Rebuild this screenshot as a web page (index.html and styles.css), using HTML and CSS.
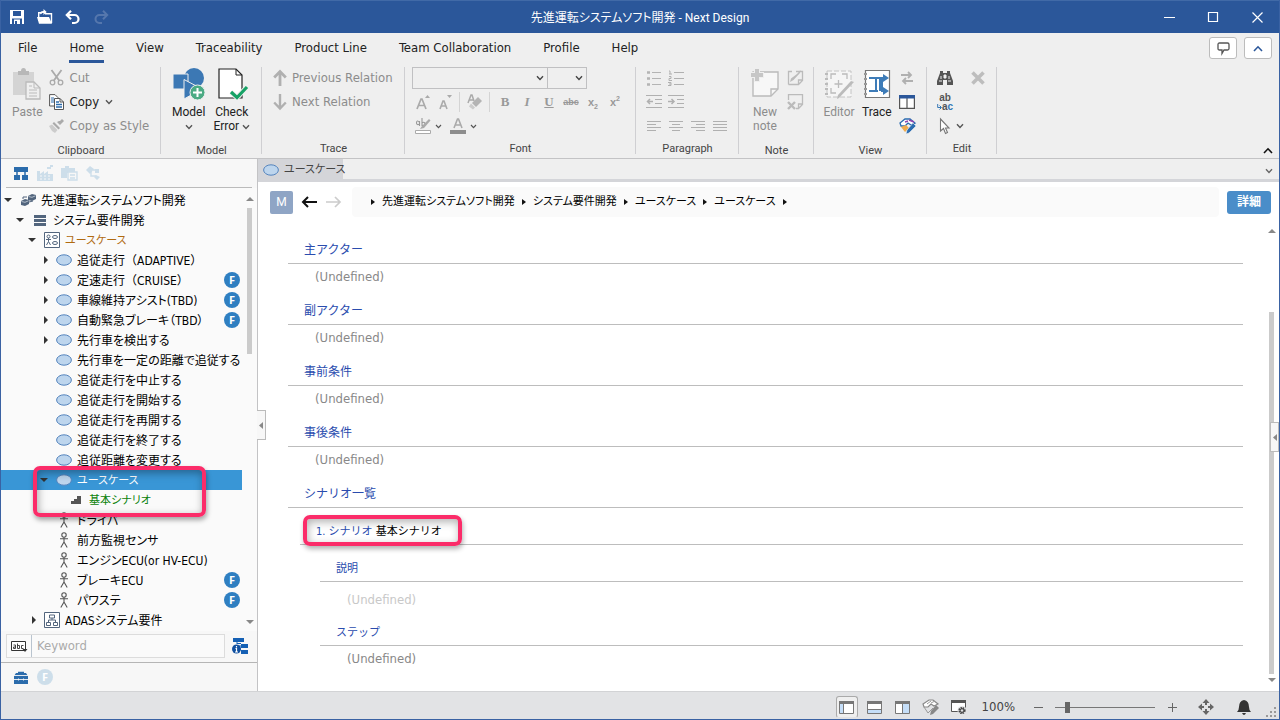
FILE: index.html
```html
<!DOCTYPE html>
<html lang="ja">
<head>
<meta charset="utf-8">
<title>先進運転システムソフト開発 - Next Design</title>
<link rel="stylesheet" href="styles.css">
</head>
<body>
<svg class="defs" width="0" height="0" aria-hidden="true">
  <symbol id="chev" viewBox="0 0 8 6"><path d="M1 1.200 4 4.400 7 1.200" fill="none" stroke="currentColor" stroke-width="1.400"/></symbol>
  <symbol id="chev-up" viewBox="0 0 10 7"><path d="M1 6 5 1.800 9 6" fill="none" stroke="currentColor" stroke-width="1.600"/></symbol>
  <symbol id="open" viewBox="0 0 8 4"><path d="M0 0h8L4 4z" fill="#333"/></symbol>
  <symbol id="closed" viewBox="0 0 4 8"><path d="M0 0v8l4-4z" fill="#333"/></symbol>
  <symbol id="oval" viewBox="0 0 16 12"><ellipse cx="8" cy="6" rx="7.400" ry="5.200" fill="#bdd5ed" stroke="#5584bd"/></symbol>
  <symbol id="actor" viewBox="0 0 10 16"><g fill="none" stroke="#555" stroke-width="1.100"><circle cx="5" cy="3" r="2.200"/><path d="M1 6.700h8M5 5.200v5M5 10 1.800 15.500M5 10l3.200 5.500"/></g></symbol>
</svg>

<div class="window">
  <header class="titlebar">
    <div class="quick">
      <button aria-label="Save"><svg width="14" height="14" viewBox="0 0 14 14"><path d="M0 0h14v14H0z" fill="#fff"/><path d="M3 1h8v5H3zM2 8.500h10V14H2z" fill="#2b579a"/><path d="M4 9.500h6V14H4z" fill="#fff"/><path d="M5 11h2v3H5z" fill="#2b579a"/></svg></button>
      <button aria-label="Open"><svg width="16" height="16" viewBox="0 0 16 16"><path d="M1.700 12V3.700H5M8 4.700h6.500V14" fill="none" stroke="#fff" stroke-width="1.400"/><path d="m0 8 2 6.700h13L12 8z" fill="#fff"/><path d="M3 5.500C3 3 4 2 6.500 2V0l3.200 3-3.200 3V4C5 4 4 4.500 3 5.500z" fill="#fff"/></svg></button>
      <button aria-label="Undo"><svg width="16" height="15" viewBox="0 0 16 15"><path d="M2 5h7.500a4 4 0 0 1 0 8H7M6 .8 1.800 5 6 9.200" fill="none" stroke="#fff" stroke-width="2.200"/></svg></button>
      <button aria-label="Redo" disabled><svg width="16" height="15" viewBox="0 0 16 15"><path d="M14 5H6.500a4 4 0 0 0 0 8H9M10 .8 14.200 5 10 9.200" fill="none" stroke="#5577ad" stroke-width="2"/></svg></button>
    </div>
    <h1>先進運転システムソフト開発 - Next Design</h1>
    <div class="winctl">
      <button aria-label="Minimize"><svg width="11" height="11"><path d="M0 5.500h11" stroke="#fff"/></svg></button>
      <button aria-label="Maximize"><svg width="11" height="11"><path d="M.5.5h9v9h-9z" fill="none" stroke="#fff" stroke-width="1.200"/></svg></button>
      <button aria-label="Close"><svg width="11" height="11"><path d="m.5.5 10 10m0-10-10 10" stroke="#fff" stroke-width="1.200"/></svg></button>
    </div>
  </header>

  <nav class="tabs">
    <a href="#">File</a><a href="#" class="active">Home</a><a href="#">View</a><a href="#">Traceability</a><a href="#">Product Line</a><a href="#">Team Collaboration</a><a href="#">Profile</a><a href="#">Help</a>
    <div class="tabs-end">
      <button aria-label="Feedback"><svg width="13" height="13"><path d="M2.500 1h8q1.500 0 1.500 1.500v4Q12 8 10.500 8H7l-2 3.500V8H2.500Q1 8 1 6.500v-4Q1 1 2.500 1z" fill="none" stroke="#555" stroke-width="1.300"/></svg></button>
      <button aria-label="Collapse ribbon" class="blue"><svg width="10" height="7"><use href="#chev-up"/></svg></button>
    </div>
  </nav>

  <section class="ribbon" aria-label="Ribbon">
    <div class="group g-clip">
      <div class="body">
        <button class="large off"><span class="pic"><svg width="30" height="32" viewBox="0 0 30 32"><path d="M1 4h21v10h-7v13H1z" fill="#d4d4d4"/><path d="M6 3h3q0-3 2.500-3T14 3h3v4H6z" fill="#b8b8b8"/><path d="M14 14h8l6 6v11H14z" fill="#efefef" stroke="#bbb" stroke-width="1.300"/><path d="M22 14v6h6M17 18h3M17 22h8M17 25h8M17 28h8" fill="none" stroke="#bbb"/></svg></span>Paste</button>
        <div class="rows">
          <button class="row off"><svg width="14" height="16" viewBox="0 0 14 16"><path d="M2 0 10 11M12 0 4 11" stroke="#aaa" stroke-width="1.800"/><circle cx="3" cy="12.500" r="2.300" fill="none" stroke="#aaa" stroke-width="1.300"/><circle cx="11" cy="12.500" r="2.300" fill="none" stroke="#aaa" stroke-width="1.300"/></svg>Cut</button>
          <button class="row"><svg width="15" height="16" viewBox="0 0 15 16"><path d="M.6.600h5.400l3 3v8.400H.6z" fill="#fff" stroke="#555"/><path d="M2 4h3M2 6h3M2 8h3" stroke="#2d6bab"/><path d="M5.500 4.500h5.500l3.500 3.500v7.500h-9z" fill="#fff" stroke="#555"/><path d="M11 4.500v3.500h3.500" fill="none" stroke="#555"/><path d="M7 8h3M7 10.500h6M7 13h6" stroke="#2d6bab" stroke-width="1.300"/></svg>Copy <svg class="c" width="8" height="6"><use href="#chev"/></svg></button>
          <button class="row off"><svg width="15" height="14" viewBox="0 0 15 14"><path d="m13 0 2 2-4 4-3-3 2-1 1 0z" fill="#aaa"/><path d="m5 3 6 6-1.500 1.500-6-6z" fill="#aaa"/><path d="m3 5.500 5.500 5.500L6 14 3 12l-3-5z" fill="#ccc"/></svg>Copy as Style</button>
        </div>
      </div>
      <span class="caption">Clipboard</span>
    </div>

    <div class="group g-model">
      <div class="body">
        <button class="large"><span class="pic"><svg width="32" height="32" viewBox="0 0 32 32"><circle cx="21" cy="10" r="10" fill="#3c78b4"/><path d="M0 6h15v15H0z" fill="#3c78b4" stroke="#efefef"/><path d="M11 11.500 29 21 11 31z" fill="#3c78b4" stroke="#efefef"/><circle cx="24.500" cy="24.500" r="7.500" fill="#4cab84" stroke="#efefef"/><path d="M24.500 20v9M20 24.500h9" stroke="#fff" stroke-width="2"/></svg></span>Model<svg class="c" width="8" height="6"><use href="#chev"/></svg></button>
        <button class="large"><span class="pic"><svg width="32" height="32" viewBox="0 0 32 32"><path d="M3 1h17l6 6v23H3z" fill="#fff" stroke="#222" stroke-width="1.200"/><path d="M20 1v6h6" fill="none" stroke="#222"/><path d="m15 24 6 5.500L31 19" fill="none" stroke="#efefef" stroke-width="5"/><path d="m15 24 6 5.500L31 19" fill="none" stroke="#17a266" stroke-width="3.200"/></svg></span>Check<span>Error <svg class="c" width="8" height="6"><use href="#chev"/></svg></span></button>
      </div>
      <span class="caption">Model</span>
    </div>

    <div class="group g-trace">
      <div class="body"><div class="rows">
        <button class="row off"><svg width="14" height="16"><path d="M7 16V2M1.200 7.500 7 1.500l5.800 6" fill="none" stroke="#b0b0b0" stroke-width="2.800"/></svg>Previous Relation</button>
        <button class="row off"><svg width="14" height="16"><path d="M7 0v14M1.200 8.500 7 14.500l5.800-6" fill="none" stroke="#b0b0b0" stroke-width="2.400"/></svg>Next Relation</button>
      </div></div>
      <span class="caption">Trace</span>
    </div>

    <div class="group g-font">
      <div class="body"><div class="rows">
        <div class="cells combos">
          <span class="combo wide"><select aria-label="Font name"><option></option></select><svg width="8" height="6"><use href="#chev"/></svg></span><span class="combo"><select aria-label="Font size"><option></option></select><svg width="8" height="6"><use href="#chev"/></svg></span>
        </div>
        <div class="cells">
          <button aria-label="Grow font"><svg width="14" height="15"><path d="m1 14 4-10h1l4 10M2.500 10.500h6" fill="none" stroke="#aaa" stroke-width="1.700"/><path d="m9 3 2.500-3L14 3z" fill="#aaa"/></svg></button>
          <button aria-label="Shrink font"><svg width="14" height="15"><path d="m2 14 3-8h1l3 8M3 11h5" fill="none" stroke="#aaa" stroke-width="1.600"/><path d="m9 0h5l-2.500 3z" fill="#aaa"/></svg></button>
          <i class="bar"></i>
          <button aria-label="Clear format"><svg width="16" height="16"><path d="M1 9 4 1h1l2 6M2 6h4" fill="none" stroke="#aaa" stroke-width="1.500"/><path d="m11 3 4 4-6 6-4-4z" fill="#b4b4b4"/><path d="m4 9.500 4 4-2 2-4-3z" fill="#ccc"/></svg></button>
          <i class="bar"></i>
          <button class="tx b">B</button><button class="tx i">I</button><button class="tx u">U</button><button class="tx s">abc</button><button class="tx x">x<sub>2</sub></button><button class="tx x">x<sup>2</sup></button>
        </div>
        <div class="cells">
          <button aria-label="Highlight"><svg width="16" height="16"><path d="M4.500 3v5M4.500 4.500C1-.5 0 9 4.500 6M7 0v8M7 5c4-3 4 5 0 2" fill="none" stroke="#999" stroke-width="1.100"/><path d="m14 1 1.500 1.500L9 10l-4 1 2-3z" fill="#aaa"/><path d="M.5 12.500h15v3H.5z" fill="#fff" stroke="#aaa"/></svg></button><button class="drop" aria-label="Highlight options"><svg class="c" width="7" height="5"><use href="#chev"/></svg></button>
          <button aria-label="Font color"><svg width="16" height="16"><path d="m4 10 3.500-9h1L12 10M5.500 7h5" fill="none" stroke="#aaa" stroke-width="1.600"/><path d="M0 12h16v4H0z" fill="#8d8d8d"/></svg></button><button class="drop" aria-label="Color options"><svg class="c" width="7" height="5"><use href="#chev"/></svg></button>
        </div>
      </div></div>
      <span class="caption">Font</span>
    </div>

    <div class="group g-para">
      <div class="body"><div class="rows">
        <div class="cells">
          <button aria-label="Bullets"><svg width="14" height="16" stroke="#b4b4b4"><path d="M5 2.500h9M5 8.500h9M5 14.500h9"/><path d="M0 2.500h3M0 8.500h3M0 14.500h3" stroke-width="2.400"/></svg></button>
          <button aria-label="Numbering"><svg width="16" height="16" stroke="#b0b0b0" fill="none"><path d="M6 2.500h10M6 8.500h10M6 14.500h10"/><path d="M1 1h1v3M1 4h3M1 6.500h2v2H1v2h3M0 12.500h3v3H0m1-1.500h2"/></svg></button>
        </div>
        <div class="cells">
          <button aria-label="Outdent"><svg width="16" height="14" stroke="#b0b0b0" fill="none"><path d="M0 .5h16M9 4.500h7M9 8.500h7M0 12.500h16"/><path d="M7 6.500H1.500M4 4 1.500 6.500 4 9" stroke-width="1.500"/></svg></button>
          <button aria-label="Indent"><svg width="16" height="14" stroke="#b0b0b0" fill="none"><path d="M0 .5h16M9 4.500h7M9 8.500h7M0 12.500h16"/><path d="M0 6.500h6M3.500 4 6 6.500 3.500 9" stroke-width="1.500"/></svg></button>
        </div>
        <div class="cells">
          <button aria-label="Left"><svg width="14" height="11" stroke="#b0b0b0"><path d="M0 .5h14M0 3.500h9M0 6.500h14M0 9.500h9"/></svg></button>
          <button aria-label="Center"><svg width="14" height="11" stroke="#b0b0b0"><path d="M0 .5h14M3 3.500h8M0 6.500h14M3 9.500h8"/></svg></button>
          <button aria-label="Right"><svg width="14" height="11" stroke="#b0b0b0"><path d="M0 .5h14M5 3.500h9M0 6.500h14M5 9.500h9"/></svg></button>
          <button aria-label="Justify"><svg width="14" height="11" stroke="#b0b0b0"><path d="M0 .5h14M0 3.500h14M0 6.500h14M0 9.500h14"/></svg></button>
        </div>
      </div></div>
      <span class="caption">Paragraph</span>
    </div>

    <div class="group g-note">
      <div class="body">
        <button class="large off"><span class="pic"><svg width="30" height="32" viewBox="0 0 30 32"><path d="M3 4h25v17l-7 7H3z" fill="#f7f7f7" stroke="#bbb" stroke-width="1.400"/><path d="M21 28v-7h7" fill="none" stroke="#bbb" stroke-width="1.400"/><path d="M7 0v14M0 7h14" stroke="#efefef" stroke-width="6"/><path d="M7 1v12M1 7h12" stroke="#c6c6c6" stroke-width="4"/></svg></span><span>New<br>note</span></button>
        <div class="rows">
          <button class="row" aria-label="Edit note"><svg width="17" height="16"><path d="M5 1.500H1.500v13M9 1.500h6.500v9l-4 4h-10M11.500 14v-4h4" fill="none" stroke="#bbb" stroke-width="1.300"/><path d="M13.500 0 10 4 4 8.500 3 12l3.500-2L13 3z" fill="#bbb"/></svg></button>
          <button class="row" aria-label="Delete note"><svg width="17" height="16"><path d="M1.500 6V.7h14v9.800l-4 4H9M11.500 14v-4h4" fill="none" stroke="#bbb" stroke-width="1.300"/><path d="m1 8 7 7m0-7-7 7" stroke="#bbb" stroke-width="2.400"/></svg></button>
        </div>
      </div>
      <span class="caption">Note</span>
    </div>

    <div class="group g-view">
      <div class="body">
        <button class="large off"><span class="pic"><svg width="32" height="32" viewBox="0 0 32 32"><path d="M4 3h24v26H4z" fill="#f5f5f5" stroke="#c4c4c4" stroke-dasharray="5 2"/><path d="M8 11V6h5M19 6h5v5M8 20v5h5M15.500 12v8M11.500 16h8" fill="none" stroke="#bbb" stroke-width="1.300"/><path d="M2 6h3M2 11h3M2 16h3M2 21h3M2 26h3" stroke="#bbb" stroke-width="2"/><path d="M31 14 16 30l-2 1 1-4L28 13z" fill="#bbb"/></svg></span>Editor</button>
        <button class="large"><span class="pic"><svg width="28" height="32" viewBox="0 0 28 32"><path d="M2.500 2.500h24v27h-24z" fill="#fff" stroke="#777" stroke-width="1.200"/><path d="M1 6h3M1 11h3M1 16h3M1 21h3M1 26h3" stroke="#999" stroke-width="2"/><path d="M6 10h7v12M6 23h5M10 23h5M17 23V10M12 10h11M17 10h2v13h4" fill="none" stroke="#3e7cb8" stroke-width="2"/><path d="m20 6 6 4-6 4zM20 19l6 4-6 4z" fill="#3e7cb8"/></svg></span>Trace</button>
        <div class="rows">
          <button class="row" aria-label="Swap"><svg width="14" height="14"><path d="M1 4h10M8 1l3 3-3 3M13 10H3m3-3-3 3 3 3" fill="none" stroke="#b0b0b0" stroke-width="1.800"/></svg></button>
          <button class="row" aria-label="Split view"><svg width="16" height="14"><path d="M.6.600h14.800v12.800H.6zM8 3v10" fill="#fff" stroke="#555" stroke-width="1.200"/><path d="M0 0h16v3.500H0z" fill="#2b579a"/></svg></button>
          <button class="row" aria-label="Paint"><svg width="17" height="16"><path d="M1 5 6 1l5 0 5 4-4 2-3-2-3 3-4 0z" fill="#fff" stroke="#2b6cb0" stroke-width="1.300"/><path d="m6 4 3-1M10 2l5 2" stroke="#8e44ad" stroke-width="1.500"/><path d="m2 9 5-2 3 3-4 4z" fill="#f0ab4c"/><path d="m14 5 3 3-7 7-3 1 1-4z" fill="#2b6cb0" stroke="#efefef" stroke-width=".6"/></svg></button>
        </div>
      </div>
      <span class="caption">View</span>
    </div>

    <div class="group g-edit">
      <div class="body"><div class="rows">
        <div class="cells"><button aria-label="Find"><svg width="16" height="14"><path d="M3 0h3v2h4V0h3v2l3 8v4h-6V9H6v5H0v-4l3-8z" fill="#555"/><path d="M7 4h2v3H7zM2 10h3M11 10h3M4 5v3M12 5v3" stroke="#efefef" fill="#efefef"/></svg></button><button class="del" aria-label="Delete"><svg width="14" height="14"><path d="m1.500 1.500 11 11m0-11-11 11" stroke="#bdbdbd" stroke-width="3.600"/></svg></button></div>
        <div class="cells"><button aria-label="Replace" class="replace"><span>ab</span><span><svg width="5" height="6"><path d="M.7 0v3.500H4M2.500 1.500l2 2-2 2" fill="none" stroke="#3578b5"/></svg>a<b>c</b></span></button></div>
        <div class="cells"><button aria-label="Select"><svg width="12" height="16"><path d="M1.500 1v12l3-2.500 2 5 2-1-2-4.500H10z" fill="#fff" stroke="#777" stroke-width="1.100"/></svg></button><button class="near" aria-label="Select options"><svg class="c" width="8" height="6"><use href="#chev"/></svg></button></div>
      </div></div>
      <span class="caption">Edit</span>
    </div>
    <button class="fold" aria-label="Fold ribbon"><svg width="10" height="7"><use href="#chev-up"/></svg></button>
  </section>

  <div class="work">
    <aside class="side">
      <div class="sidebar-tools">
        <button aria-label="Structure"><svg width="14" height="13"><path d="M0 0h14v5H0zM0 8h6v5H0zM8 8h6v5H8z" fill="#2b6cac"/><path d="M3 4v5M11 4v5" stroke="#2b6cac" stroke-width="1.500"/></svg></button>
        <button aria-label="Product line"><svg width="16" height="16" fill="#cddeea"><path d="M0 6h3v3l4-3v3l4-3v3h5v7H0zM10 2h4v2h-4zM13 0h3v2h-3z"/><path d="M3 11h2M7 11h2M11 11h2M3 14h2M7 14h2M11 14h2" stroke="#f7f7f7"/></svg></button>
        <button aria-label="Documents"><svg width="17" height="15"><path d="M0 2h4V0h4v2h6v5H6v5H0z" fill="#cddeea"/><path d="M7 6h9v8H7zM9 9h5M9 12h5" fill="#f7f7f7" stroke="#cddeea" stroke-width="1.400"/></svg></button>
        <button aria-label="Links"><svg width="15" height="14" fill="#cddeea"><path d="m4 0 4 3-4 5-4-4zM9 3h4v4H9zM10 9l4 2-3 3-3-3z"/><path d="M5 5v5h5M7 4h4" fill="none" stroke="#cddeea" stroke-width="1.400"/></svg></button>
      </div>
      <div class="tree-area">
        <ul class="tree">
          <li><span class="tw"><svg width="8" height="4"><use href="#open"/></svg></span><span class="ic"><svg width="15" height="13"><path d="m7 2 4-2 4 1v4l-4 2-4-1zM0 7l4-2 4 1v4l-4 2-4-1z" fill="#52657d"/><path d="M2 5V3h4M8 8l4-1" fill="none" stroke="#52657d"/><path d="m7.500 2.500 3.500.8 3.500-1.500M.5 7.500 4 8.300l3.500-1.500" stroke="#ccd4dd" fill="none" stroke-width=".8"/></svg></span>先進運転システムソフト開発</li>
          <li class="l1"><span class="tw"><svg width="8" height="4"><use href="#open"/></svg></span><span class="ic"><svg width="12" height="11"><path d="M0 0h12v3H0zM0 4h12v3H0zM0 8h12v3H0z" fill="#52657d"/></svg></span>システム要件開発</li>
          <li class="l2 kana orange"><span class="tw"><svg width="8" height="4"><use href="#open"/></svg></span><span class="ic"><svg width="16" height="16"><g fill="none" stroke="#52657d"><path d="M.5.5h15v15H.5z" fill="#fff"/><circle cx="4.500" cy="4.500" r="1.500"/><path d="M2 7.500h5M4.500 6v3.500L2.500 13m2-3.500 2 3.500"/><ellipse cx="11" cy="5" rx="2.500" ry="1.500"/><ellipse cx="11" cy="11" rx="2.500" ry="1.500"/></g></svg></span>ユースケース</li>
          <li class="l3 full"><span class="tw shut"><svg width="4" height="8"><use href="#closed"/></svg></span><span class="ic"><svg width="16" height="12"><use href="#oval"/></svg></span>追従走行（ADAPTIVE）</li>
          <li class="l3 full"><span class="tw shut"><svg width="4" height="8"><use href="#closed"/></svg></span><span class="ic"><svg width="16" height="12"><use href="#oval"/></svg></span>定速走行（CRUISE）<b class="f">F</b></li>
          <li class="l3"><span class="tw shut"><svg width="4" height="8"><use href="#closed"/></svg></span><span class="ic"><svg width="16" height="12"><use href="#oval"/></svg></span>車線維持アシスト(TBD)<b class="f">F</b></li>
          <li class="l3"><span class="tw shut"><svg width="4" height="8"><use href="#closed"/></svg></span><span class="ic"><svg width="16" height="12"><use href="#oval"/></svg></span>自動緊急ブレーキ（TBD）<b class="f">F</b></li>
          <li class="l3"><span class="tw shut"><svg width="4" height="8"><use href="#closed"/></svg></span><span class="ic"><svg width="16" height="12"><use href="#oval"/></svg></span>先行車を検出する</li>
          <li class="l3"><span class="tw"></span><span class="ic"><svg width="16" height="12"><use href="#oval"/></svg></span>先行車を一定の距離で追従する</li>
          <li class="l3"><span class="tw"></span><span class="ic"><svg width="16" height="12"><use href="#oval"/></svg></span>追従走行を中止する</li>
          <li class="l3"><span class="tw"></span><span class="ic"><svg width="16" height="12"><use href="#oval"/></svg></span>追従走行を開始する</li>
          <li class="l3"><span class="tw"></span><span class="ic"><svg width="16" height="12"><use href="#oval"/></svg></span>追従走行を再開する</li>
          <li class="l3"><span class="tw"></span><span class="ic"><svg width="16" height="12"><use href="#oval"/></svg></span>追従走行を終了する</li>
          <li class="l3"><span class="tw"></span><span class="ic"><svg width="16" height="12"><use href="#oval"/></svg></span>追従距離を変更する</li>
          <li class="l3 kana selected"><span class="tw"><svg width="8" height="4"><use href="#open"/></svg></span><span class="ic"><svg width="16" height="12"><use href="#oval"/></svg></span>ユースケース<i class="callout"></i></li>
          <li class="l4 kana green"><span class="tw"></span><span class="ic"><svg width="10" height="9"><path d="M0 5h3V3h3V0h4v8H0z" fill="#555"/></svg></span>基本シナリオ</li>
          <li class="l3"><span class="tw"></span><span class="ic"><svg width="10" height="16"><use href="#actor"/></svg></span>ドライバ</li>
          <li class="l3"><span class="tw"></span><span class="ic"><svg width="10" height="16"><use href="#actor"/></svg></span>前方監視センサ</li>
          <li class="l3"><span class="tw"></span><span class="ic"><svg width="10" height="16"><use href="#actor"/></svg></span>エンジンECU(or HV-ECU)</li>
          <li class="l3"><span class="tw"></span><span class="ic"><svg width="10" height="16"><use href="#actor"/></svg></span>ブレーキECU<b class="f">F</b></li>
          <li class="l3"><span class="tw"></span><span class="ic"><svg width="10" height="16"><use href="#actor"/></svg></span>パワステ<b class="f">F</b></li>
          <li class="l2"><span class="tw shut"><svg width="4" height="8"><use href="#closed"/></svg></span><span class="ic"><svg width="16" height="16"><g fill="none" stroke="#52657d"><path d="M.5.500h15v15H.5z" fill="#fff"/><path d="M5.500 3h5v3h-5zM2.500 10.500h4v3h-4zM9.500 10.500h4v3h-4zM8 6v2M4.500 10.500V8h7v2.500"/></g></svg></span>ADASシステム要件</li>
        </ul>
        <div class="scroll"><svg width="8" height="4"><path d="M0 4h8L4 0z" fill="#888"/></svg><i class="thumb"></i><svg class="end" width="8" height="4"><path d="M0 0h8L4 4z" fill="#888"/></svg></div>
      </div>
      <div class="search">
        <div class="box"><button aria-label="Match mode"><svg width="17" height="11"><path d="M.5.500h14v9H.5z" fill="#fff" stroke="#333"/><g fill="none" stroke="#333" stroke-width=".9"><path d="M2.500 4h2v3.500h-2V6h2M6.500 2.500v5h2V4.500h-2M12.500 4.500h-2v3h2"/></g><path d="M11.500 8h5l-2.500 3z" fill="#333"/></svg></button><input type="text" placeholder="Keyword" aria-label="Keyword"></div>
        <button class="filter" aria-label="Filter"><svg width="16" height="16"><path d="M1 0h11v4H1zM9 6h7v4H9zM9 12h7v4H9z" fill="#1560b4"/><path d="M5 4v2M5 5.500h4M7 8h3" stroke="#1560b4"/><circle cx="4.500" cy="11" r="4.500" fill="#1050a0"/><path d="M4.500 8v1.500M3.500 10.500h1V14M3 14h3" stroke="#fff" stroke-width="1.200" fill="none"/></svg></button>
      </div>
      <div class="side-foot">
        <button aria-label="Toolbox"><svg width="14" height="13"><path d="M4 2V.7h6V2h2l2 3v8H0V5l2-3z" fill="#2b6cac"/><path d="M0 4.500h14M0 8.500h14M4.500 7.500v2M9.500 7.500v2" stroke="#f7f7f7" stroke-width=".9"/></svg></button>
        <button aria-label="Feature" class="f dim">F</button>
      </div>
    </aside>

    <main class="main">
      <div class="doctabs"><button class="doctab"><svg width="16" height="12"><use href="#oval"/></svg>ユースケース</button><button class="more" aria-label="Tab list"><svg width="8" height="6"><use href="#chev"/></svg></button></div>
      <div class="crumbbar">
        <button class="m">M</button>
        <button class="nav" aria-label="Back"><svg width="16" height="12"><path d="M16 6H2M7 1 2 6l5 5" fill="none" stroke="#111" stroke-width="2"/></svg></button>
        <button class="nav fwd" aria-label="Forward"><svg width="16" height="12"><path d="M0 6h14M9 1l5 5-5 5" fill="none" stroke="#ccc" stroke-width="1.700"/></svg></button>
        <nav class="crumbs"><i></i><a href="#">先進運転システムソフト開発</a><i></i><a href="#">システム要件開発</a><i></i><a href="#">ユースケース</a><i></i><a href="#">ユースケース</a><i></i></nav>
        <button class="detail">詳細</button>
      </div>
      <div class="doc">
        <div class="sheet">
          <p class="value">(Undefined)</p>
          <section><h2>主アクター</h2><p class="value">(Undefined)</p></section>
          <section><h2>副アクター</h2><p class="value">(Undefined)</p></section>
          <section><h2>事前条件</h2><p class="value">(Undefined)</p></section>
          <section><h2>事後条件</h2><p class="value">(Undefined)</p></section>
          <section><h2>シナリオ一覧</h2>
            <article>
              <h3><span class="mark">1. シナリオ <b>基本シナリオ</b></span></h3>
              <div class="sub">
                <h4>説明</h4><p class="value light">(Undefined)</p>
                <h4>ステップ</h4><p class="value">(Undefined)</p>
              </div>
            </article>
          </section>
        </div>
        <div class="scroll doc-scroll"><svg width="8" height="4"><path d="M0 4h8L4 0z" fill="#888"/></svg><i class="thumb"></i><svg class="end" width="8" height="4"><path d="M0 0h8L4 4z" fill="#888"/></svg></div>
      </div>
      <button class="handle left" aria-label="Collapse left"><svg width="4" height="7"><path d="M4 0v7L0 3.500z" fill="#888"/></svg></button>
      <button class="handle right" aria-label="Expand right"><svg width="4" height="7"><path d="M4 0v7L0 3.500z" fill="#888"/></svg></button>
    </main>
  </div>

  <footer class="status">
    <button class="on" aria-label="Navigator"><svg width="15" height="13"><path d="M.5.500h14v12H.5z" fill="#fff" stroke="#777"/><path d="M1 3h3v9H1z" fill="#c5def8"/><path d="M0 0h15v3H0zM4 3h1v9H4z" fill="#777"/></svg></button>
    <button aria-label="Lower pane"><svg width="15" height="13"><path d="M.5.500h14v12H.5z" fill="#fff" stroke="#777"/><path d="M1 8h13v4H1z" fill="#c5def8"/><path d="M0 0h15v3H0zM1 8h13v1H1z" fill="#777"/></svg></button>
    <button aria-label="Side pane"><svg width="15" height="13"><path d="M.5.500h14v12H.5z" fill="#fff" stroke="#777"/><path d="M8 3h6v9H8z" fill="#c5def8"/><path d="M0 0h15v3H0zM7 3h1v9H7z" fill="#777"/></svg></button>
    <button aria-label="Appearance"><svg width="17" height="16"><path d="M1 5 7 1l4 0 5 4-4 2-3-2-3 3-4 0z" fill="#fff" stroke="#888" stroke-width="1.200"/><path d="m5 5 4-3M9 4l4-2M2 8l4 6 5-5" stroke="#999" fill="none"/><path d="m14 6 3 3-6 6-3 1 1-4z" fill="#888"/></svg></button>
    <button aria-label="View settings"><svg width="16" height="15"><path d="M.5.500h14v11H.5z" fill="#fff" stroke="#555"/><path d="M0 0h15v3H0z" fill="#555"/><circle cx="11" cy="10.500" r="4.500" fill="#e2e3e5"/><circle cx="11" cy="10.500" r="2.600" fill="none" stroke="#444" stroke-width="2" stroke-dasharray="1.400 .7"/><circle cx="11" cy="10.500" r="1.800" fill="none" stroke="#444"/></svg></button>
    <output>100%</output>
    <button class="minus" aria-label="Zoom out"><svg width="9" height="9"><path d="M0 4.500h9" stroke="#666"/></svg></button>
    <input type="range" min="0" max="100" value="10" aria-label="Zoom">
    <button class="plus" aria-label="Zoom in"><svg width="9" height="9"><path d="M0 4.500h9M4.500 0v9" stroke="#666"/></svg></button>
    <button aria-label="Fit"><svg width="16" height="16" fill="#666"><path d="m8 0 3.500 4h-7zM8 16l3.500-4h-7zM0 8l4-3.500v7zM16 8l-4-3.500v7z"/><path d="M7 4h2v2H7zM7 10h2v2H7zM4 7h2v2H4zM10 7h2v2h-2z"/></svg></button>
    <button class="bell" aria-label="Notifications"><svg width="14" height="15"><path d="M7 0q5 1 5 7 0 3 2 5H0q2-2 2-5 0-6 5-7zM5 13h4q-1 2-2 2t-2-2z" fill="#333"/></svg></button>
    <svg class="grip" width="10" height="10" fill="#999"><path d="M8 0h2v2H8zM8 4h2v2H8zM8 8h2v2H8zM4 4h2v2H4zM4 8h2v2H4zM0 8h2v2H0z"/></svg>
  </footer>
</div>
</body>
</html>
```

FILE: styles.css
```css
* { box-sizing: border-box; }
body, h1, h2, h3, h4, p, ul { margin: 0; padding: 0; font-weight: normal; }
body {
  height: 100vh;
  overflow: hidden;
  font: 13px/16px "DejaVu Sans Condensed", "Noto Sans CJK JP", sans-serif;
  color: #222;
}
button, select, input { font: inherit; color: inherit; border: 0; background: none; padding: 0; margin: 0; border-radius: 0; }
button { display: flex; align-items: center; justify-content: center; flex: none; white-space: nowrap; }
a { color: inherit; text-decoration: none; }
svg { display: block; flex: none; overflow: visible; }
.defs { position: absolute; }
.c { color: #555; }

.window {
  height: 100%;
  display: flex;
  flex-direction: column;
  border: solid #3a62a3;
  border-width: 0 1px 1px;
  background: #efefef;
}

/* Title bar */
.titlebar { flex: none; height: 33px; display: grid; grid-template-columns: 1fr auto 1fr; align-items: center; background: #2b579a; color: #fff; border-top: 1px solid #416aa7; }
.titlebar h1 { font: 12px/18px Roboto, "Noto Sans CJK JP", sans-serif; font-feature-settings: "palt"; padding-top: 2px; }
.quick { display: flex; gap: 12px; padding-left: 8px; }
.quick button { width: 16px; height: 20px; }
.winctl { display: flex; justify-content: flex-end; }
.winctl button { width: 44px; height: 32px; }

/* Ribbon tabs */
.tabs { flex: none; height: 33px; display: flex; align-items: flex-start; gap: 32px; padding-left: 17px; }
.tabs a { height: 30px; padding-top: 7px; border-bottom: 3px solid transparent; white-space: nowrap; }
.tabs a.active { border-color: #2b579a; }
.tabs-end { margin-left: auto; display: flex; gap: 7px; padding: 4px 7px 0 0; }
.tabs-end button { width: 28px; height: 22px; border: 1px solid #bcbcbc; border-radius: 3px; background: #fff; }
.blue { color: #2b579a; }

/* Ribbon */
.ribbon { flex: none; height: 93px; display: flex; position: relative; border-bottom: 1px solid #c3c3c5; }
.group { position: relative; flex: none; display: flex; flex-direction: column; }
.group::after { content: ""; position: absolute; right: 0; top: 1px; bottom: 4px; width: 1px; background: #cfcfd2; }
.body { height: 76px; display: flex; }
.caption { font: 11px/18px Roboto, sans-serif; text-align: center; color: #444; }
.large { height: 76px; flex-direction: column; justify-content: flex-start; font: 12px/14px Roboto, sans-serif; }
.large .pic { height: 37px; padding-top: 2px; margin-bottom: 2px; }
.large > .c { margin-top: 5px; }
.large span .c { display: inline-block; }
.off { color: #8c8c8c; }
.rows { display: flex; flex-direction: column; }
.row { height: 24px; gap: 5px; justify-content: flex-start; line-height: 18px; }
.cells { height: 24px; display: flex; align-items: center; }
.cells button { width: 22px; height: 22px; }
.g-clip { width: 160px; }
.g-clip .body { padding-left: 11px; gap: 6px; }
.g-clip .row { gap: 6px; }
.g-clip .row > svg:first-child { width: 15px; }
.g-model { width: 101px; }
.g-model .body { padding-left: 11px; gap: 8px; }
.g-trace { width: 143px; }
.g-trace .body { padding-left: 11px; }
.g-font { width: 231px; }
.g-font .body { padding-left: 7px; }
.combo { position: relative; width: 40px; height: 22px; }
.combo + .combo { margin-left: -1px; }
.combo.wide { width: 136px; }
.combo select { width: 100%; height: 100%; appearance: none; border: 1px solid #c0c0c2; }
.combo svg { position: absolute; right: 4px; top: 8px; color: #444; }
.bar { width: 1px; height: 20px; margin: 0 4px 0 3px; background: #d4d4d4; }
.cells .drop { width: 9px; margin-right: 4px; }
.tx { color: #999; font-weight: bold; }
.tx.b, .tx.i, .tx.u { font: bold 13px/16px "Liberation Serif", serif; }
.tx.i { font-style: italic; }
.tx.u { text-decoration: underline; }
.tx.s { font: bold 9px/14px "Liberation Sans", sans-serif; text-decoration: line-through; }
.tx.x { font: bold 11px/14px "Liberation Sans", sans-serif; }
.tx sub, .tx sup { font-size: 7px; line-height: 7px; }
.tx sub { align-self: flex-end; margin-bottom: 3px; }
.tx sup { align-self: flex-start; margin-top: 4px; }
.g-para { width: 103px; }
.g-para .body { padding-left: 7px; }
.g-note { width: 75px; }
.g-note .body { padding-left: 11px; gap: 7px; }
.g-view { width: 113px; }
.g-view .body { padding-left: 9px; gap: 7px; }
.g-view .row { justify-content: center; }
.g-edit { width: 70px; }
.g-edit .body { padding-left: 7px; }
.cells .del { margin-left: 11px; }
.replace { flex-direction: column; font: bold 10px/9px "Liberation Sans", sans-serif; color: #555; }
.replace span { display: flex; align-items: center; }
.replace b { color: #3578b5; }
.cells .near { width: 8px; }
.fold { position: absolute; right: 6px; bottom: 4px; color: #111; }

/* Work area */
.work { flex: 1; min-height: 0; display: flex; }
.side { width: 257px; flex: none; display: flex; flex-direction: column; background: #f7f7f7; border-right: 1px solid #c3c3c5; }
.sidebar-tools { flex: none; height: 29px; margin: 0 5px; padding-left: 7px; display: flex; gap: 8px; align-items: center; border-bottom: 1px solid #bbb; }
.sidebar-tools button { width: 16px; }
.tree-area { flex: 1; min-height: 0; display: flex; padding-top: 2px; background: #fafafa; }
.tree { flex: 1; list-style: none; font-size: 12px; font-feature-settings: "palt"; color: #000; }
.tree li { height: 20px; display: flex; align-items: center; padding-top: 2px; white-space: nowrap; position: relative; }
.tree .full { font-feature-settings: normal; }
.tree .kana { font-size: 11px; }
.tw { width: 14px; flex: none; display: flex; justify-content: center; margin: 0 5px 2px 0; }
.shut { padding-left: 4px; }
.ic { width: 16px; flex: none; display: flex; justify-content: center; margin: 0 5px 2px 0; }
.l1 { padding-left: 12px; }
.l2 { padding-left: 24px; }
.l3 { padding-left: 36px; }
.l4 { padding-left: 48px; }
.tree .orange { color: #b06a10; }
.tree .green { color: #0a820a; }
.tree .selected { background: #3996d6; color: #fff; z-index: 1; }
.callout { position: absolute; left: 32px; top: -4px; width: 173px; height: 51px; border: 4px solid #fb2c69; border-radius: 7px; box-shadow: 1px 3px 5px rgba(0,0,0,.35), inset 1px 3px 8px rgba(0,0,0,.35); }
.f { width: 16px; height: 16px; border-radius: 50%; background: #2f7fc1; color: #fff; font: bold 11px/16px "Noto Sans", sans-serif; text-align: center; }
.tree .f { margin: 0 2px 2px auto; }
.f.dim { background: #cddeea; }
.scroll { width: 15px; flex: none; display: flex; flex-direction: column; align-items: center; padding: 7px 0; }
.thumb { width: 5px; height: 146px; margin-top: 7px; background: #cbcbcb; }
.scroll .end { margin-top: auto; }
.search { flex: none; height: 32px; padding: 3px 9px 4px 5px; display: flex; justify-content: space-between; align-items: center; border-bottom: 1px solid #b5b5b5; }
.box { width: 219px; height: 24px; display: flex; border: 1px solid #dcdcdc; background: #fafafa; }
.box button { width: 25px; border-right: 1px solid #b9c4cf; }
.box input { flex: 1; min-width: 0; padding-left: 5px; outline: 0; }
.box input::placeholder { color: #aaa; opacity: 1; }
.side-foot { flex: none; height: 28px; display: flex; align-items: center; gap: 9px; padding-left: 13px; }

/* Document pane */
.main { flex: 1; min-width: 0; display: flex; flex-direction: column; position: relative; background: #fff; }
.doctabs { flex: none; height: 23px; display: flex; justify-content: space-between; background: #efefef; border-bottom: 3px solid #d4d5d9; }
.doctab { padding: 2px 0 0 5px; width: 85px; justify-content: flex-start; gap: 5px; background: #d4d5d9; color: #444; font-size: 11px; font-feature-settings: "palt"; }
.more { padding: 4px 6px 0 0; color: #666; }
.crumbbar { flex: none; height: 39px; display: flex; align-items: center; padding: 1px 8px 0 12px; }
.m { width: 23px; height: 23px; border-radius: 2px; background: #8fa5c5; color: #fff; font: 12px/16px Roboto, sans-serif; }
.nav { margin-left: 8px; }
.nav.fwd { margin-left: 9px; }
.crumbs { flex: 1; height: 30px; margin: 0 8px 0 10px; padding-left: 19px; display: flex; align-items: center; gap: 7px; border-radius: 4px; background: #fafafa; color: #000; font-size: 11px; font-feature-settings: "palt"; white-space: nowrap; }
.crumbs i { border: solid transparent; border-width: 3px 0 3px 4px; border-left-color: #111; }
.detail { width: 44px; height: 23px; border-radius: 3px; background: #4a8dc9; color: #fff; font-weight: bold; font-size: 12px; }
.doc { flex: 1; min-height: 0; overflow: hidden; display: flex; }
.sheet { flex: 1; margin-top: -18px; padding: 0 21px 0 30px; }
.value { height: 25px; line-height: 25px; margin-bottom: 8px; padding-left: 27px; color: #888; }
.light { color: #c8c8c8; }
h2, h3, h4 { height: 28px; line-height: 29px; padding-left: 16px; border-bottom: 1px solid #bdbdbd; color: #2a4cae; }
h2 { font-size: 12px; }
h3, h4 { font-size: 11px; line-height: 30px; }
article { margin: 9px 0 0 12px; }
.mark { position: relative; }
.mark::after { content: ""; position: absolute; left: -13px; right: -20px; top: -10px; bottom: -8px; border: 4px solid #fb2c69; border-radius: 7px; box-shadow: 1px 3px 5px rgba(0,0,0,.3), inset 1px 3px 8px rgba(0,0,0,.3); }
.mark b { font-weight: normal; color: #000; }
.sub { margin: 9px 0 0 20px; }
.sub .light { margin: 5px 0 6px; }
.doc-scroll { padding: 8px 0 9px; }
.doc-scroll .thumb { height: 362px; margin-top: 79px; }
.handle { position: absolute; top: 251px; width: 9px; height: 30px; background: #f7f7f7; border: 1px solid #bbb; }
.handle.left { left: -1px; border-left: 0; }
.handle.right { right: 0; top: 263px; }

/* Status bar */
.status { flex: none; height: 28px; display: flex; align-items: center; justify-content: flex-end; gap: 6px; padding: 3px 3px 0 0; border-top: 1px solid #d2d3d5; background: #e2e3e5; }
.status button { width: 22px; height: 22px; }
.status .on { border: 1px solid #aaa; border-bottom-color: #e2e3e5; border-radius: 3px; background: #efefef; }
.status output { margin: 0 6px; color: #444; }
.status .plus { margin-right: 6px; }
.status input { appearance: none; width: 100px; height: 16px; background: linear-gradient(#777, #777) center / 100% 1px no-repeat; }
.status input::-webkit-slider-thumb { appearance: none; width: 5px; height: 11px; background: #666; }
.status .bell { margin: 0 5px 0 10px; }
.grip { align-self: flex-end; margin-bottom: 2px; }
```
